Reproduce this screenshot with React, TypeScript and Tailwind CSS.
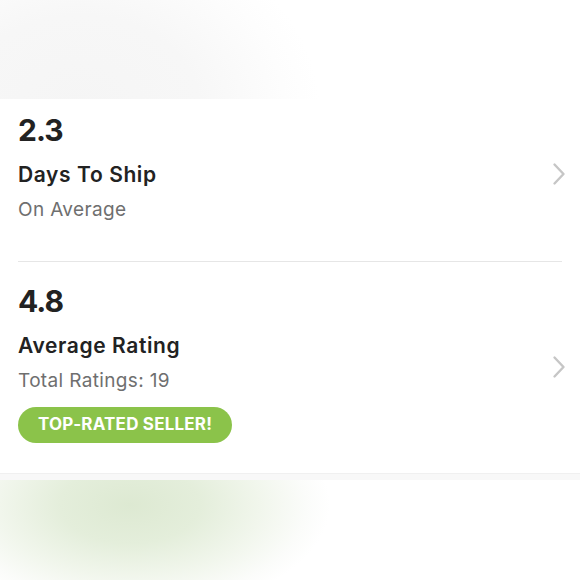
const font = { fontFamily: 'Inter, "Open Sans", Arial, sans-serif' };

interface StatRowProps {
  value: string;
  title: string;
  subtitle: string;
  badge?: string;
  first?: boolean;
}

function Chevron({ className }: { className?: string }) {
  return (
    <svg className={className} width="14" height="24" viewBox="0 0 14 24" fill="none">
      <path d="M2.5 2.5 L11.5 12 L2.5 21.5" stroke="#c6c6c6" strokeWidth="2.4" strokeLinecap="round" strokeLinejoin="round" />
    </svg>
  );
}

function StatRow({ value, title, subtitle, badge, first }: StatRowProps) {
  return (
    <div
      className={
        first
          ? 'flex items-start justify-between pt-[13px] pb-[40px] border-b border-[#e6e6e6]'
          : 'flex items-start justify-between pt-[21px] pb-[30px]'
      }
    >
      <div>
        <div className="text-[30px] leading-[36px] font-bold tracking-[-1px] text-[#222222]">{value}</div>
        <div className="mt-[15px] text-[21px] leading-[24px] font-semibold tracking-[0.6px] text-[#222222]">{title}</div>
        <div className="mt-[12px] text-[19px] leading-[22px] tracking-[0.35px] text-[#6f6f6f]">{subtitle}</div>
        {badge && (
          <div className="mt-[15px] inline-flex h-[36px] items-center rounded-full bg-[#8bc34a] px-[20px] text-[17px] font-bold tracking-[0.2px] text-white">
            {badge}
          </div>
        )}
      </div>
      <Chevron className={first ? 'mr-[-4px] mt-[50px]' : 'mr-[-4px] mt-[72px]'} />
    </div>
  );
}

export default function App() {
  return (
    <div className="flex h-[580px] w-[580px] flex-col overflow-hidden bg-white" style={font}>
      {/* Blurred header area */}
      <div className="h-[99px] bg-[radial-gradient(ellipse_240px_190px_at_80px_110px,#f5f5f5_0%,#f7f7f7_50%,#fdfdfd_85%,#ffffff_100%)]" />

      {/* Stats card */}
      <div className="bg-white px-[18px]">
        <StatRow first value="2.3" title="Days To Ship" subtitle="On Average" />
        <StatRow value="4.8" title="Average Rating" subtitle="Total Ratings: 19" badge="TOP-RATED SELLER!" />
      </div>

      <div className="h-[7px] border-t border-[#f0f0f0] bg-[#f8f8f8]" />

      {/* Blurred footer area */}
      <div className="flex-1 bg-[radial-gradient(ellipse_200px_110px_at_130px_25px,#dde9d2_0%,#e4eedb_35%,#f1f6ec_65%,#fbfcfa_88%,#ffffff_100%)]" />
    </div>
  );
}
